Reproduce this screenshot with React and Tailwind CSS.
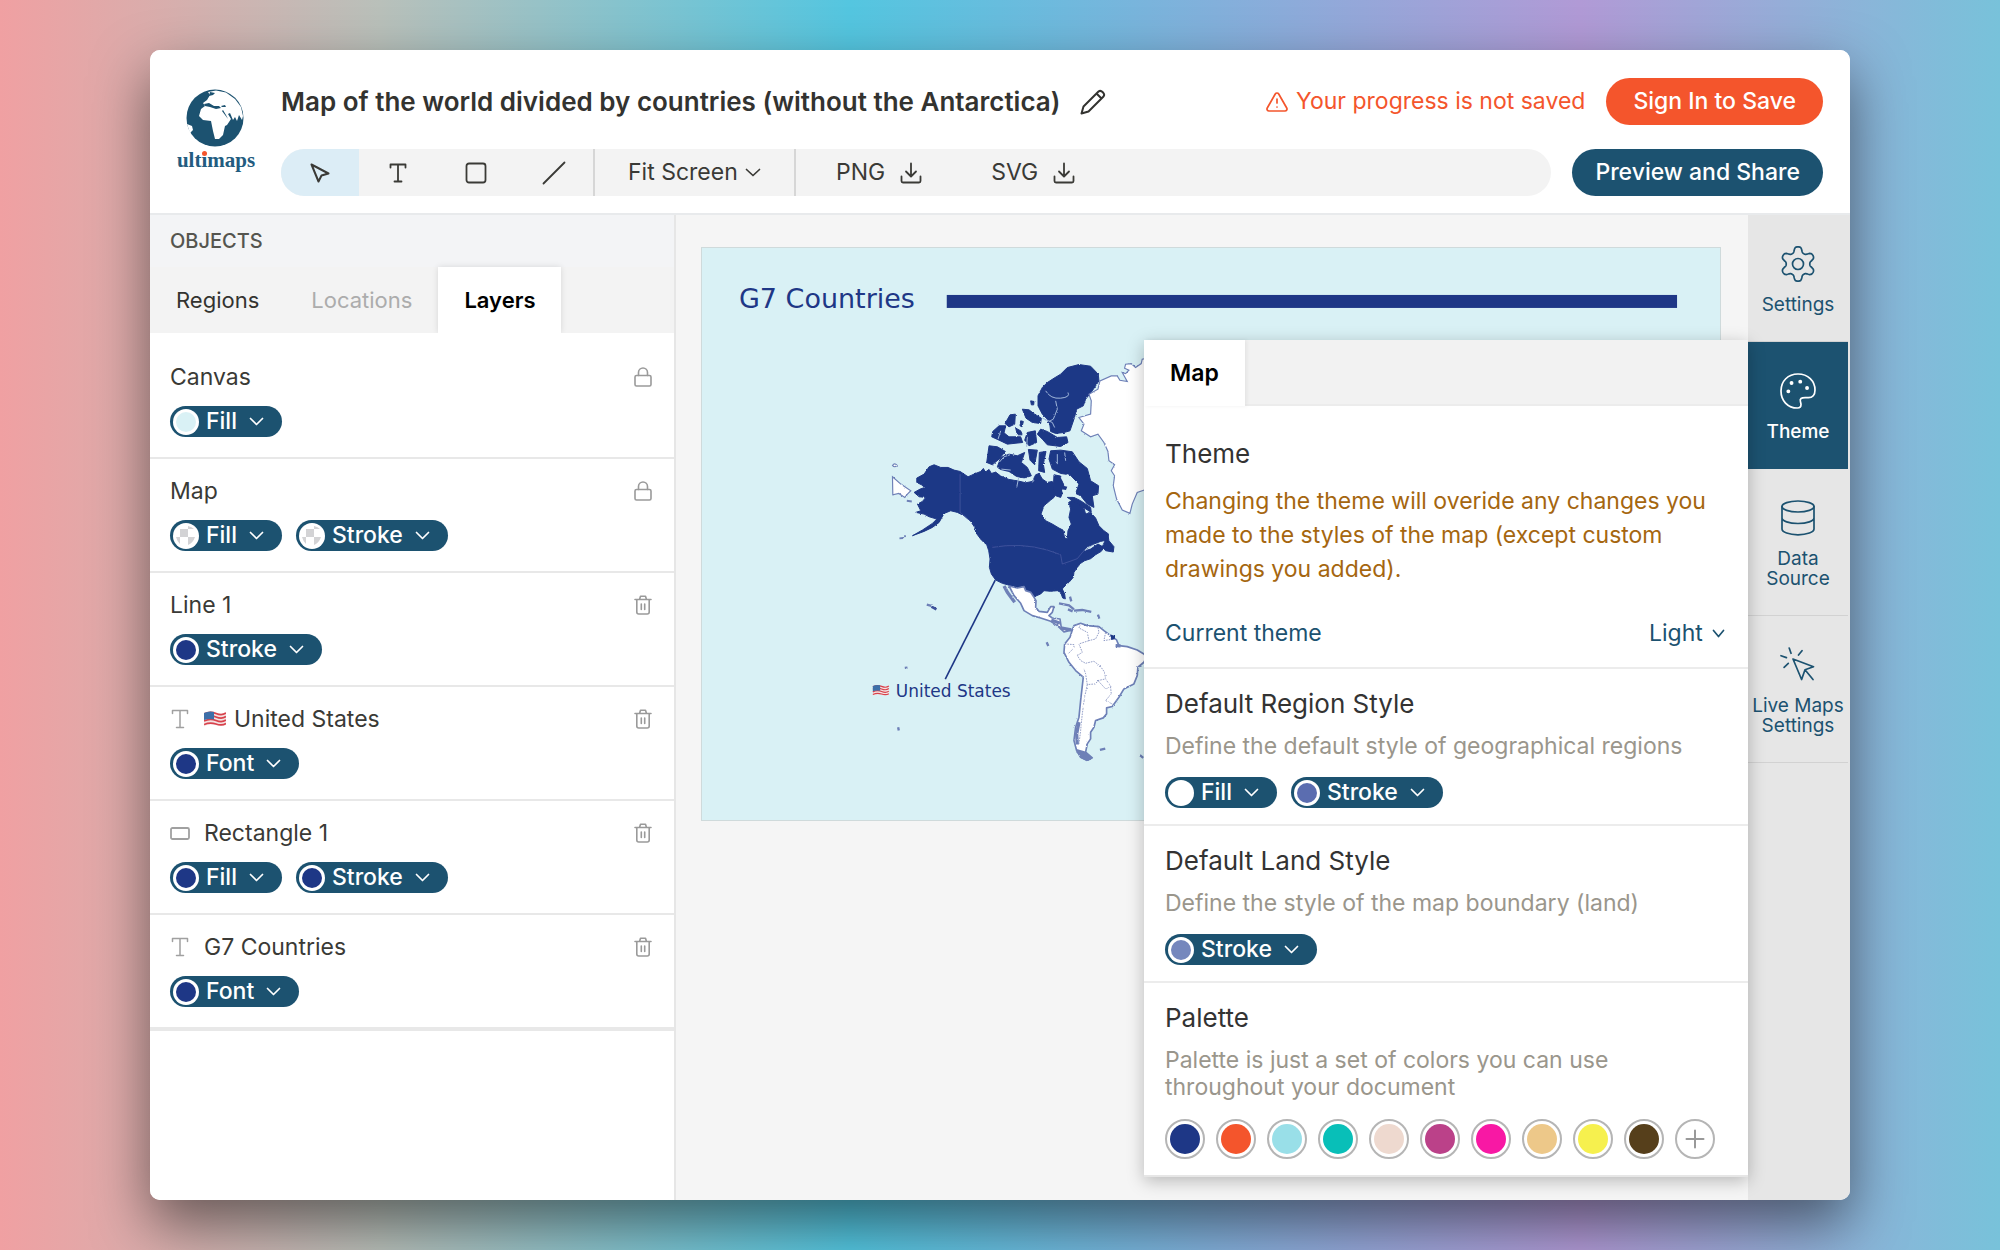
import React, { useState } from 'react';
import { TriangleAlert } from 'lucide-react';

const layers = [
    { name: 'Canvas', locked: true, styles: [{ label: 'Fill', color: '#d9f1f5' }] },
    { name: 'Map', locked: true, styles: [{ label: 'Fill' }, { label: 'Stroke' }] },
    { name: 'Line 1', styles: [{ label: 'Stroke', color: '#1e3786' }] },
    { name: 'United States', icon: 'text', flag: true, styles: [{ label: 'Font', color: '#1e3786' }] },
    { name: 'Rectangle 1', icon: 'rect', styles: [{ label: 'Fill', color: '#1e3786' }, { label: 'Stroke', color: '#1e3786' }] },
    { name: 'G7 Countries', icon: 'text', styles: [{ label: 'Font', color: '#1e3786' }] },
];

const palette = ['#1e3786', '#f4552c', '#99dfe8', '#08bfb8', '#eed9cf', '#bb4189', '#f818a4', '#edc889', '#f6f04e', '#563f1b'];

// Six-toothed gear outline
const gearPath = Array.from({ length: 120 }, (_, i) => {
    const a = (i / 120) * Math.PI * 2;
    const r = 14.5 + 3 * Math.tanh(1.5 * Math.cos(6 * a));
    return `${i ? 'L' : 'M'}${(18 + r * Math.sin(a)).toFixed(2)} ${(18 - r * Math.cos(a)).toFixed(2)}`;
}).join('') + 'Z';

const Stroke = ({ w, h, sw = 2, className = '', children }) => (
    <svg width={w} height={h} viewBox={`0 0 ${w} ${h}`} fill="none" stroke="currentColor" strokeWidth={sw} strokeLinecap="round" strokeLinejoin="round" className={`shrink-0 ${className}`} aria-hidden="true">
        {children}
    </svg>
);

const Chevron = ({ w = 15, className }) => (
    <Stroke w={w} h={9} sw={1.7} className={className}><path d={`M1.5 1.5L${w / 2} 7.5L${w - 1.5} 1.5`} /></Stroke>
);

const TextIcon = ({ sw = 1.8 }) => (
    <Stroke w={18} h={20} sw={sw}><path d="M1.5 4.5V1.5H16.5V4.5M9 1.5V18.5M5.500 18.500H12.500" /></Stroke>
);

const DownloadIcon = () => (
    <Stroke w={22} h={22} sw={1.8}><path d="M11 1.5V14M6 9.5L11 14.5L16 9.5M1.5 14.5V19Q1.5 20.5 3 20.5H19Q20.5 20.5 20.5 19V14.5" /></Stroke>
);

const LockIcon = () => (
    <Stroke w={18} h={20} sw={1.6}><rect x="1" y="8.5" width="16" height="10.5" rx="1.5" /><path d="M4.5 8.5V5.5A4.5 4.5 0 0 1 13.500 5.5V8.5" /></Stroke>
);

const TrashIcon = () => (
    <Stroke w={18} h={20} sw={1.6}><path d="M1 4.500H17M5.500 4.500L6.500 1.200H11.500L12.500 4.500M2.800 4.500V17Q2.800 19 4.800 19H13.200Q15.200 19 15.200 17V4.500M7.300 9V14.500M10.700 9V14.500" /></Stroke>
);

const FlagShape = () => (
    <>
        <path d="M0 2Q6 -1 12 1.500T22 1V14Q17 16 11 14T0 15.500Z" fill="#f3e3e3" />
        <path d="M0 3Q6 0 12 2.500T22 2M0 6.500Q6 3.500 12 6T22 5.500M0 10Q6 7 12 9.500T22 9M0 13.500Q6 11 12 13T22 12.500" stroke="#d8424c" strokeWidth="1.6" fill="none" />
        <path d="M0 2Q5 -.5 10 1V8.500Q5 7.500 0 9Z" fill="#3d6fa8" />
    </>
);

const Logo = () => (
    <a href="#home" className="flex w-[78px] shrink-0 flex-col items-center">
        <svg width="58" height="58" viewBox="0 0 58 58" className="mr-[3px]" aria-hidden="true">
            <circle cx="29" cy="29" r="28.500" fill="#1c5270" />
            <path d="M22 3L30 1.500L40 3.500L49 10L55 18L57 27L56 31L53 26L51 32L49 28L47 31L44 24L42 25L45 30L41 36L39 37L37 46L33 50L29 50L27 42L25 32L17 31L13 27L15 20L19 17L17 14L21 11L24 6Z" fill="#fff" />
            <path d="M18 15L23 14L28 17L33 17L35 19L30 20L24 18L19 17ZM36 22L39 26L42 30L40 26L37 21ZM24 3L29 4L27 6L23 7ZM35 17L39 16L40 18L36 18Z" fill="#1c5270" />
            <path d="M1 35L6 37L7 41L4 44Z" fill="#fff" />
        </svg>
        <span className="relative font-['Liberation_Serif',serif] text-[21px]/[26px] font-bold text-[#235c80]">
            ultimaps
            <span className="absolute top-[4px] left-[25px] size-[5px] rounded-full bg-[#f4552c]" />
        </span>
    </a>
);

const Swatch = ({ color }) => (
    <svg width="26" height="26" viewBox="0 0 26 26" aria-hidden="true">
        <circle cx="13" cy="13" r="13" fill="#fff" />
        {color ? (
            <circle cx="13" cy="13" r="10" fill={color} />
        ) : (
            <path d="M7 6H15V14H7ZM15 14H22Q20 20 15 22ZM15 6V3Q19 4 21 6ZM7 14V21Q4 18 3 14Z" fill="#d3d3d5" />
        )}
    </svg>
);

const StyleButton = ({ label, color }) => (
    <button className="flex h-[31px] items-center rounded-full bg-[#1c5270] pr-[18px] pl-[3px] text-[23px]/[31px] font-medium text-white">
        <Swatch color={color} />
        <span className="mr-[12px] ml-[7px]">{label}</span>
        <Chevron />
    </button>
);

const LayerRow = ({ layer }) => (
    <li className="border-b-2 border-[#e8e8e8] px-[20px] pt-[20px] pb-[20px]">
        <div className="flex h-[24px] items-center text-[23px]/[24px] text-[#3a3a36]">
            {layer.icon && (
                <span className="mr-[14px] flex w-[20px] justify-center text-[#a0a0a0]">
                    {layer.icon === 'text' ? <TextIcon sw={1.5} /> : <Stroke w={20} h={13} sw={1.8}><rect x="1" y="1" width="18" height="11" rx="1.500" /></Stroke>}
                </span>
            )}
            {layer.flag && <svg width="22" height="16" viewBox="0 0 22 16" className="mr-[8px]" aria-hidden="true"><FlagShape /></svg>}
            <span>{layer.name}</span>
            <button className="mr-[2px] ml-auto text-[#9a9a9a]" aria-label={layer.locked ? `Lock ${layer.name}` : `Delete ${layer.name}`}>
                {layer.locked ? <LockIcon /> : <TrashIcon />}
            </button>
        </div>
        <div className="mt-[17px] flex gap-[14px]">
            {layer.styles.map(s => <StyleButton key={s.label} {...s} />)}
        </div>
    </li>
);

const RailButton = ({ label, active, children }) => (
    <button className={`flex w-full flex-col items-center border-b pt-[31px] pb-[26px] text-[19px]/[20px] ${active ? 'border-[#1c5270] bg-[#1c5270] font-medium text-white' : 'border-[#d2d2d2] text-[#1c5270]'}`}>
        <Stroke w={36} h={36} sw={1.7} className="mb-[13px]">{children}</Stroke>
        {label}
    </button>
);

const PanelSection = ({ title, note, children }) => (
    <section className="border-t-2 border-[#ececec] px-[21px] pt-[20px] pb-[16px]">
        <h2 className="text-[26px]/[30px] text-[#333]">{title}</h2>
        <p className="mt-[14px] text-[23px]/[27px] text-[#9a968c]">{note}</p>
        {children}
    </section>
);

const MapArtwork = () => (
    <svg viewBox="701 247 1019 573" className="block w-full" role="img" aria-label="G7 Countries map">
        <defs>
            <filter id="coast" x="-5%" y="-5%" width="110%" height="110%">
                <feTurbulence type="fractalNoise" baseFrequency="0.300" numOctaves="2" seed="4" />
                <feDisplacementMap in="SourceGraphic" scale="6" xChannelSelector="R" yChannelSelector="G" />
            </filter>
        </defs>
        <rect x="701" y="247" width="1019" height="573" fill="#d9f1f5" />
        <text x="738" y="307" fontSize="27" fill="#1e3786" fontFamily="Verdana, 'DejaVu Sans', sans-serif">G7 Countries</text>
        <rect x="946" y="294" width="731" height="13" fill="#1e3786" />

        {/* northern half */}
        <g transform="translate(860 330) scale(.33333)" filter="url(#coast)">
            <path fill="#1e3786" stroke="#1e3786" strokeWidth="3" d="M160 485L178 475L192 470L182 462L168 455L168 442L190 430L205 408L220 402L240 410L262 410L280 418L298 422L322 438L340 430L360 422L368 413L374 424L385 416L392 428L405 424L420 436L445 446L470 450L495 456L515 452L525 432L535 428L545 445L560 455L575 452L582 470L590 480L580 500L570 508L550 525L541 550L555 570L575 580L595 592L607 598L612 622L620 624L622 600L632 580L625 560L630 535L624 515L640 505L655 520L670 532L675 550L690 545L705 562L715 585L730 600L744 610L740 628L720 632L700 640L680 648L668 662L690 655L712 640L730 650L722 662L705 672L690 684L672 690L660 698L650 710L640 725L638 740L625 755L610 768L605 775L612 790L614 805L606 802L600 785L590 780L570 782L550 780L540 790L528 795L520 800L510 785L495 780L490 768L470 772L440 762L425 758L405 748L392 730L386 710L388 685L384 660L378 642L362 628L345 605L342 590L330 572L310 555L290 545L270 540L250 548L235 575L215 590L190 602L155 615L185 598L215 578L228 565L205 558L190 550L165 545L180 540L170 520L185 512L195 500L175 498Z" />
            <path fill="#1e3786" stroke="#1e3786" strokeWidth="3" d="M600 130L620 110L655 101L690 106L713 130L715 150L695 180L675 205L668 225L648 235L640 265L628 300L610 305L585 308L570 302L568 285L560 265L545 250L532 225L532 195L545 170L560 155L580 142Z" />
            <path fill="#1e3786" stroke="#1e3786" strokeWidth="3" d="M540 295L560 302L590 320L618 318L622 335L600 347L560 342L545 325L530 310ZM500 305L524 300L528 335L505 345L492 328ZM485 235L505 237L522 250L542 262L540 278L515 275L496 262ZM433 278L448 252L464 250L462 280L445 288ZM465 292L480 300L485 312L470 312ZM415 285L435 285L430 306L445 318L480 318L486 335L440 340L415 328L393 318L396 302ZM510 210L520 212L519 222L512 222ZM480 270L488 272L484 288L478 285Z" />
            <path fill="#1e3786" stroke="#1e3786" strokeWidth="3" d="M385 345L410 348L434 362L415 385L395 402L378 395ZM420 380L445 370L470 375L492 365L482 395L500 410L512 435L490 442L460 436L425 430L410 408ZM503 356L530 358L522 402L508 388ZM536 365L556 362L548 400L552 425L534 420ZM570 360L600 358L635 363L655 393L680 413L690 450L714 465L712 490L695 495L700 530L680 520L660 495L645 488L655 460L628 432L600 428L575 415L565 385ZM580 432L600 436L612 470L600 500L585 495L578 470ZM620 500L640 500L660 510L690 530L692 545L665 528ZM742 612L745 630L760 648L758 664L735 660L725 648Z" />
            <path fill="#d9f1f5" d="M600 440L622 430L640 452L650 468L636 490L612 498L604 480L612 462ZM590 512L606 512L604 522L592 520ZM400 405L420 418L445 424L470 440L500 445L520 444L515 449L480 449L440 442L410 424Z" />
            <path fill="#1e3786" d="M608 465L620 468L616 478L606 476Z" />
            <path fill="none" stroke="#9fb8da" strokeWidth="3" d="M555 180Q570 205 600 202T622 185M585 210L590 235L578 265L565 272M545 262L575 275L582 290M415 395L430 378L448 372M422 415L450 418M590 370L590 400M612 365L615 390M412 325L420 300M498 348L500 318M515 455L520 448M468 470L474 440" />
            <path fill="none" stroke="#5b6db0" strokeWidth="1.5" d="M298 430V545L330 572M395 650Q480 635 560 658L600 672L605 700L650 684L668 662L700 640" />
            <path fill="#fff" stroke="#6e80b7" strokeWidth="3.500" d="M960 60L870 80L845 85L842 98L825 110L812 98L795 100L792 112L805 118L795 128L785 125L800 152L778 148L770 135L752 135L718 150L712 175L685 190L692 210L690 250L655 260L670 280L662 300L690 318L712 310L730 335L742 362L745 390L762 402L752 420L762 435L758 465L768 505L785 538L808 548L815 520L830 485L860 475L960 400Z" />
            <path fill="#fff" stroke="#6e80b7" strokeWidth="3.500" d="M95 438L120 460L150 480L140 490L132 500L114 488L96 492ZM95 404Q101 395 109 404Q101 412 95 404Z" />
            <path stroke="#6e80b7" strokeWidth="6" d="M138 510L153 512M116 623L127 622M130 617L135 616" />
        </g>

        {/* southern half */}
        <g transform="translate(860 540) scale(.33333)" filter="url(#coast)">
            <path fill="#fff" stroke="#6e80b7" strokeWidth="5" strokeLinejoin="round" d="M445 136L470 142L490 138L495 150L510 155L520 170L526 180L525 200L535 212L560 215L570 198L580 198L575 215L565 225L575 232L598 235L602 262L625 270L635 268L610 274L590 255L570 242L540 232L515 225L490 210L480 188L460 165Z" />
            <path fill="none" stroke="#6e80b7" strokeWidth="10" d="M430 136L440 155L462 185M600 262L632 268M572 238L598 248" />
            <path fill="#fff" stroke="#6e80b7" strokeWidth="5" strokeLinejoin="round" d="M635 268L640 255L660 248L680 255L715 258L730 270L750 285L768 298L775 315L800 318L830 328L850 340L858 350L850 365L832 380L830 405L820 430L790 445L775 470L755 498L738 502L738 520L728 532L705 540L700 560L690 575L690 595L680 610L675 635L695 652L680 660L660 650L648 630L640 600L645 560L655 530L660 480L668 410L645 390L625 365L610 335L612 310L628 290Z" />
            <path fill="none" stroke="#6e80b7" strokeWidth="10" d="M655 545L648 580L650 612M650 632L672 648L692 654M765 315L780 316" />
            <path fill="#6e80b7" d="M645 625L672 632L696 652L680 662L658 652Z" />
            <path fill="none" stroke="#7f8dbd" strokeWidth="2.500" strokeDasharray="5 3" d="M660 250L655 262L680 275L685 300L705 295L715 275L712 260M735 275L730 300L755 296M685 300L655 310L665 335L650 345L660 360L675 368M612 310L640 312L640 322L622 340M675 368L700 362L720 378L732 395L735 415L712 420L705 430L680 432L675 400L670 385M712 420L735 445L750 440L752 460L735 480L758 492M735 415L752 440M680 432L672 470L665 520L660 570L655 610" />
            <path fill="#1e3786" d="M750 282L764 286L762 296L752 298Z" />
            <path fill="none" stroke="#6e80b7" strokeWidth="7" d="M595 188L625 194L640 206M640 210L665 208L692 214M622 206L636 212M628 168L632 182M712 222L716 234M718 628L734 624M838 644L848 652M558 305L563 316M198 192L212 196M132 382L140 381M112 560L114 570" />
            <path fill="none" stroke="#3d519a" strokeWidth="8" d="M212 198L227 206" />
        </g>
        <path d="M994.500 579.500L944.500 678.500" stroke="#1e3786" strokeWidth="1.600" />
        <g transform="translate(872 684) scale(.73)"><FlagShape /></g>
        <text x="895" y="696" fontSize="17" fill="#1e3786" fontFamily="Verdana, 'DejaVu Sans', sans-serif">United States</text>
    </svg>
);

const Header = ({ zoom, setZoom }) => (
    <header className="flex border-b-2 border-[#e8eaec] bg-white pt-[28px] pr-[27px] pb-[17px] pl-[27px]">
        <div className="pt-[11px]"><Logo /></div>
        <div className="ml-[26px] flex min-w-0 flex-1 flex-col gap-[24px]">
            <div className="flex h-[47px] items-center">
                <h1 className="text-[26px]/[32px] font-semibold whitespace-nowrap text-[#333330]">Map of the world divided by countries (without the Antarctica)</h1>
                <button className="ml-[20px] text-[#333330]" aria-label="Rename map">
                    <Stroke w={26} h={26}><path d="M1.500 24.500L3.500 17.500L18.500 2.500Q20.500 1 22.800 3.200T23.500 7.500L8.500 22.500ZM16.500 4.500L21.500 9.500" /></Stroke>
                </button>
                <p className="ml-auto flex items-center gap-[7px] text-[23px] whitespace-nowrap text-[#f4552c]">
                    <TriangleAlert size={24} strokeWidth={1.700} /> Your progress is not saved
                </p>
                <button className="ml-[21px] h-[47px] rounded-full bg-[#f4552c] px-[27px] text-[23px] font-medium whitespace-nowrap text-white">Sign In to Save</button>
            </div>
            <div className="flex h-[47px]">
                <div className="flex flex-1 overflow-hidden rounded-full bg-[#f3f3f3] text-[23px] text-[#3a3a36]">
                    <button className="flex w-[78px] items-center justify-center bg-[#dcedf6]" aria-label="Select">
                        <Stroke w={20} h={20}><path d="M1.500 1.500L18.500 10.500L11.500 12.500L8.500 18.500Z" /></Stroke>
                    </button>
                    <button className="flex w-[78px] items-center justify-center" aria-label="Text"><TextIcon /></button>
                    <button className="flex w-[78px] items-center justify-center" aria-label="Rectangle">
                        <Stroke w={22} h={22} sw={1.8}><rect x="1.500" y="1.500" width="19" height="19" rx="2.500" /></Stroke>
                    </button>
                    <button className="flex w-[78px] items-center justify-center" aria-label="Line">
                        <Stroke w={24} h={24} sw={1.8}><path d="M1.500 22.500L22.500 1.500" /></Stroke>
                    </button>
                    <label className="flex w-[203px] items-center justify-center border-x-2 border-[#d6d6d6]">
                        <select value={zoom} onChange={e => setZoom(e.target.value)} className="appearance-none bg-transparent outline-none" aria-label="Zoom">
                            <option>Fit Screen</option>
                        </select>
                        <Chevron w={16} className="ml-[7px]" />
                    </label>
                    <button className="ml-[40px] flex items-center gap-[15px]">PNG <DownloadIcon /></button>
                    <button className="ml-[69px] flex items-center gap-[15px]">SVG <DownloadIcon /></button>
                </div>
                <button className="ml-[21px] rounded-full bg-[#1c5270] px-[23px] text-[23px] font-medium whitespace-nowrap text-white">Preview and Share</button>
            </div>
        </div>
    </header>
);

const ThemePanel = ({ theme, setTheme }) => (
    <div className="absolute top-[125px] right-0 w-[604px] border-b-2 border-[#e6e6e6] bg-white shadow-[0_4px_16px_rgba(0,0,0,0.250)]">
        <div className="flex h-[66px] border-b-2 border-[#ececec] bg-[#f2f2f2]">
            <button className="-mb-[2px] bg-white px-[26px] text-[23px] font-semibold text-black shadow-[2px_0_4px_rgba(0,0,0,0.060)]">Map</button>
        </div>
        <section className="px-[21px] pt-[33px] pb-[18px]">
            <h2 className="text-[26px]/[30px] text-[#333]">Theme</h2>
            <p className="mt-[15px] text-[23px]/[34px] text-[#a5660f]">Changing the theme will overide any changes you made to the styles of the map (except custom drawings you added).</p>
            <div className="mt-[31px] flex items-center justify-between text-[23px]/[32px] text-[#1c5270]">
                <label htmlFor="theme">Current theme</label>
                <span className="flex items-center">
                    <select id="theme" value={theme} onChange={e => setTheme(e.target.value)} className="appearance-none bg-transparent outline-none">
                        <option>Light</option>
                    </select>
                    <Chevron w={13} className="mr-[2px] ml-[9px]" />
                </span>
            </div>
        </section>
        <PanelSection title="Default Region Style" note="Define the default style of geographical regions">
            <div className="mt-[17px] flex gap-[14px]">
                <StyleButton label="Fill" color="#ffffff" />
                <StyleButton label="Stroke" color="#5b6db0" />
            </div>
        </PanelSection>
        <PanelSection title="Default Land Style" note="Define the style of the map boundary (land)">
            <div className="mt-[17px] flex"><StyleButton label="Stroke" color="#7587bd" /></div>
        </PanelSection>
        <PanelSection title="Palette" note="Palette is just a set of colors you can use throughout your document">
            <div className="mt-[18px] flex gap-[11px]">
                {palette.map(c => (
                    <button key={c} className="size-[40px] rounded-full border-2 border-[#b5b5b5] p-[3px]" aria-label={`Color ${c}`}>
                        <span className="block size-full rounded-full" style={{ background: c }} />
                    </button>
                ))}
                <button className="flex size-[40px] items-center justify-center rounded-full border-2 border-[#b5b5b5] text-[#999]" aria-label="Add color">
                    <Stroke w={20} h={20}><path d="M10 1.500V18.500M1.500 10H18.500" /></Stroke>
                </button>
            </div>
        </PanelSection>
    </div>
);

const App = () => {
    const [tab, setTab] = useState('Layers');
    const [zoom, setZoom] = useState('Fit Screen');
    const [theme, setTheme] = useState('Light');

    return (
        <div className="flex min-h-screen flex-col bg-[linear-gradient(90deg,#f0a0a2_0%,#b9c0ba_19%,#54c6e0_42.500%,#b19ad6_79%,#78c2da_100%)] px-[7.500%] py-[50px] font-[Inter,sans-serif]">
            <div className="flex flex-1 flex-col overflow-hidden rounded-[10px] bg-white shadow-[0_24px_56px_rgba(0,0,0,0.500)]">
                <Header zoom={zoom} setZoom={setZoom} />
                <div className="flex flex-1">
                    <aside className="w-[526px] shrink-0 border-r-2 border-[#e6e6e6] bg-white">
                        <h2 className="bg-[#f3f4f6] px-[20px] pt-[12px] pb-[12px] text-[20px]/[28px] font-medium text-[#55554f]">OBJECTS</h2>
                        <nav className="flex h-[66px] bg-[#f3f3f3] text-[22px]">
                            {['Regions', 'Locations', 'Layers'].map(t => (
                                <button
                                    key={t}
                                    disabled={t === 'Locations'}
                                    onClick={() => setTab(t)}
                                    className={`px-[26px] ${t === tab ? 'bg-white font-semibold text-black shadow-[0_0_6px_rgba(0,0,0,0.120)]' : t === 'Locations' ? 'text-[#acacac]' : 'text-[#333330]'}`}
                                >
                                    {t}
                                </button>
                            ))}
                        </nav>
                        <ul className="relative border-b-2 border-[#e8e8e8] bg-white pt-[12px]">
                            {layers.map(l => <LayerRow key={l.name} layer={l} />)}
                        </ul>
                    </aside>
                    <main className="relative min-w-0 flex-1 bg-[#f5f5f5] pt-[32px] pr-[27px] pl-[25px]">
                        <div className="border border-[#cfdadb]"><MapArtwork /></div>
                        <ThemePanel theme={theme} setTheme={setTheme} />
                    </main>
                    <nav className="w-[102px] shrink-0 bg-[#e6e6e6] pr-[2px]">
                        <RailButton label="Settings">
                            <path d={gearPath} />
                            <circle cx="18" cy="18" r="5.500" />
                        </RailButton>
                        <RailButton label="Theme" active>
                            <path d="M17.500 35C7.500 35 1 27.500 1 18C1 8 8 1 18 1C28 1 35 8 35 17C35 22 32.500 24.700 28.500 24.700C26 24.700 23 24 21 25.500C19 27 21 29 21 31.500C21 34 19.500 35 17.500 35Z" />
                            <g strokeWidth="3.800"><path d="M8.300 18.300h.1M11.500 10h.1M20.200 8.700h.1M27 15h.1" /></g>
                        </RailButton>
                        <RailButton label={<>Data<br />Source</>}>
                            <ellipse cx="18" cy="6.500" rx="16" ry="5.500" />
                            <path d="M2 6.500V29C2 32 9 34.800 18 34.800S34 32 34 29V6.500M2 18C2 21 9 23.500 18 23.500S34 21 34 18" />
                        </RailButton>
                        <RailButton label={<>Live Maps<br />Settings</>}>
                            <path d="M13 12L33.500 19.700L25 22.800L21.600 32.500ZM25 22.800L33 32.500M1 8.700L6.400 10.600M4.100 20.300L8.300 16.300M9.200 1L11 6.300M22 3.700L18.500 8" />
                        </RailButton>
                    </nav>
                </div>
            </div>
        </div>
    );
};

export default App;
